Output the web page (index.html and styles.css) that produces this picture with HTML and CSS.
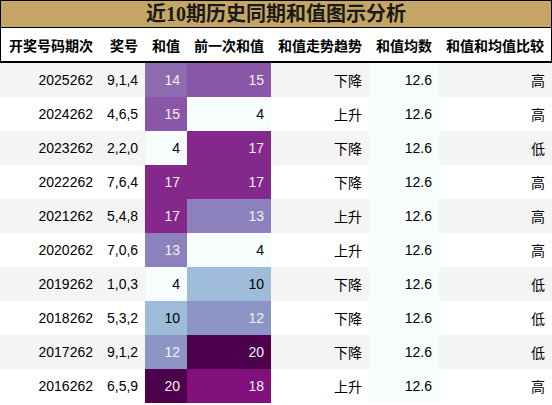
FILE: index.html
```html
<!DOCTYPE html>
<html lang="zh-CN">
<head>
    <meta charset="UTF-8">
    <meta name="viewport" content="width=device-width, initial-scale=1.0">
    <title>近10期历史同期和值图示分析</title>
    <link rel="stylesheet" href="styles.css">
</head>
<body>

    <div class="report">
        <!-- Title bar -->
        <div class="report-title">近10期历史同期和值图示分析</div>

        <table class="sum-table">
            <colgroup>
                <col style="width:100px">
                <col style="width:45px">
                <col style="width:42px">
                <col style="width:84px">
                <col style="width:98px">
                <col style="width:70px">
                <col style="width:113px">
            </colgroup>
            <thead>
                <tr>
                    <th>开奖号码期次</th>
                    <th>奖号</th>
                    <th>和值</th>
                    <th>前一次和值</th>
                    <th>和值走势趋势</th>
                    <th>和值均数</th>
                    <th>和值和均值比较</th>
                </tr>
            </thead>
            <tbody>
                <tr>
                    <td>2025262</td><td>9,1,4</td>
                    <td class="g14">14</td><td class="g15">15</td>
                    <td>下降</td><td class="avg">12.6</td><td>高</td>
                </tr>
                <tr>
                    <td>2024262</td><td>4,6,5</td>
                    <td class="g15">15</td><td class="g4">4</td>
                    <td>上升</td><td class="avg">12.6</td><td>高</td>
                </tr>
                <tr>
                    <td>2023262</td><td>2,2,0</td>
                    <td class="g4">4</td><td class="g17">17</td>
                    <td>下降</td><td class="avg">12.6</td><td>低</td>
                </tr>
                <tr>
                    <td>2022262</td><td>7,6,4</td>
                    <td class="g17">17</td><td class="g17">17</td>
                    <td>下降</td><td class="avg">12.6</td><td>高</td>
                </tr>
                <tr>
                    <td>2021262</td><td>5,4,8</td>
                    <td class="g17">17</td><td class="g13">13</td>
                    <td>上升</td><td class="avg">12.6</td><td>高</td>
                </tr>
                <tr>
                    <td>2020262</td><td>7,0,6</td>
                    <td class="g13">13</td><td class="g4">4</td>
                    <td>上升</td><td class="avg">12.6</td><td>高</td>
                </tr>
                <tr>
                    <td>2019262</td><td>1,0,3</td>
                    <td class="g4">4</td><td class="g10">10</td>
                    <td>下降</td><td class="avg">12.6</td><td>低</td>
                </tr>
                <tr>
                    <td>2018262</td><td>5,3,2</td>
                    <td class="g10">10</td><td class="g12">12</td>
                    <td>下降</td><td class="avg">12.6</td><td>低</td>
                </tr>
                <tr>
                    <td>2017262</td><td>9,1,2</td>
                    <td class="g12">12</td><td class="g20">20</td>
                    <td>下降</td><td class="avg">12.6</td><td>低</td>
                </tr>
                <tr>
                    <td>2016262</td><td>6,5,9</td>
                    <td class="g20">20</td><td class="g18">18</td>
                    <td>上升</td><td class="avg">12.6</td><td>高</td>
                </tr>
            </tbody>
        </table>
    </div>

</body>
</html>
```

FILE: styles.css
```css
body {
    margin: 0;
    padding: 0;
    background: #ffffff;
    font-family: "Liberation Sans", "Noto Sans CJK SC", sans-serif;
    color: #000000;
}

.report {
    width: 552px;
}

/* Title bar */
.report-title {
    height: 26px;
    line-height: 26px;
    border: 1px solid #000000;
    background: #c5a666;
    text-align: center;
    font-family: "Liberation Serif", "Noto Sans CJK SC", serif;
    font-size: 20px;
    font-weight: bold;
    color: #1a1a1a;
}

.sum-table {
    width: 552px;
    table-layout: fixed;
    border-collapse: separate;
    border-spacing: 0;
    font-size: 14px;
}

.sum-table th {
    height: 33px;
    padding: 0 7px;
    text-align: right;
    font-weight: bold;
    white-space: nowrap;
    background: #ffffff;
    border-bottom: 2px solid #000000;
}

.sum-table th:first-child {
    border-left: 1px solid #000000;
}

.sum-table th:last-child {
    border-right: 1px solid #000000;
}

.sum-table td {
    height: 34px;
    padding: 0 7px;
    text-align: right;
    white-space: nowrap;
    color: #000000;
}

.sum-table tbody tr:nth-child(odd) {
    background: #f4f4f4;
}

.sum-table tbody tr:nth-child(even) {
    background: #ffffff;
}

/* average column has its own flat tint */
.sum-table td.avg {
    background: #f7fcfd;
}

/* BuPu gradient, 4 (low) to 20 (high) */
.sum-table td.g4  { background: #f7fcfd; color: #000000; }
.sum-table td.g10 { background: #9ebcda; color: #000000; }
.sum-table td.g12 { background: #8c96c6; color: #f1f1f1; }
.sum-table td.g13 { background: #8c81bc; color: #f1f1f1; }
.sum-table td.g14 { background: #8c6bb1; color: #f1f1f1; }
.sum-table td.g15 { background: #8a56a7; color: #f1f1f1; }
.sum-table td.g17 { background: #84288c; color: #f1f1f1; }
.sum-table td.g18 { background: #810f7c; color: #f1f1f1; }
.sum-table td.g20 { background: #4d004b; color: #f1f1f1; }
```
